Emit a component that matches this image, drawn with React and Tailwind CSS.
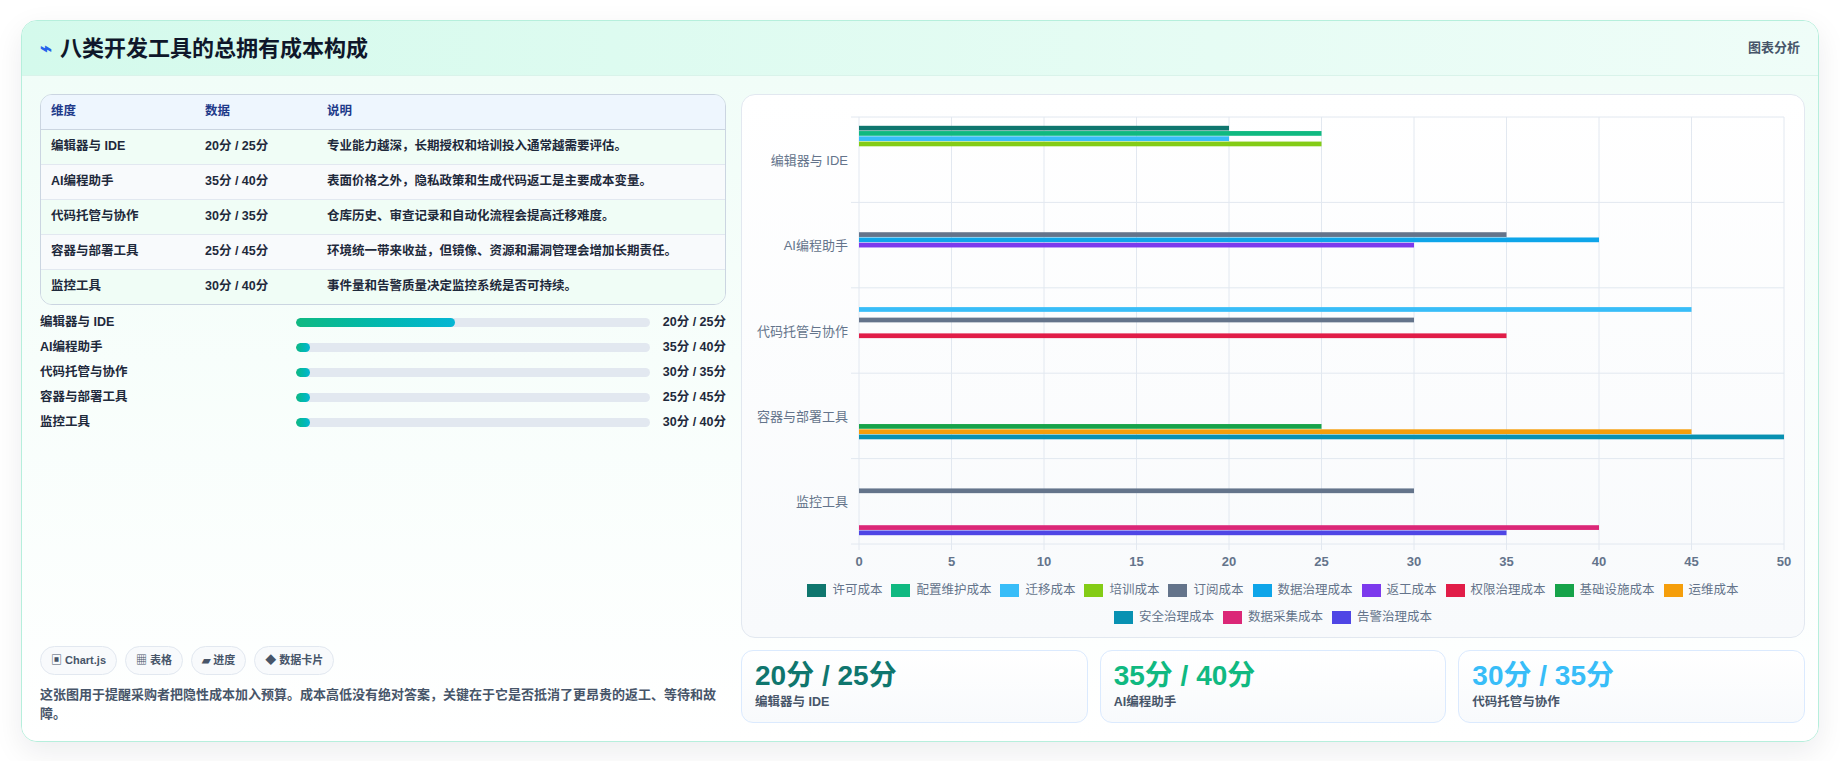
const font = { fontFamily: '"Liberation Sans","Noto Sans CJK SC",sans-serif' };

const rows = [
  { name: '编辑器与 IDE', data: '20分 / 25分', note: '专业能力越深，长期授权和培训投入通常越需要评估。', pct: 45 },
  { name: 'AI编程助手', data: '35分 / 40分', note: '表面价格之外，隐私政策和生成代码返工是主要成本变量。', pct: 4 },
  { name: '代码托管与协作', data: '30分 / 35分', note: '仓库历史、审查记录和自动化流程会提高迁移难度。', pct: 4 },
  { name: '容器与部署工具', data: '25分 / 45分', note: '环境统一带来收益，但镜像、资源和漏洞管理会增加长期责任。', pct: 4 },
  { name: '监控工具', data: '30分 / 40分', note: '事件量和告警质量决定监控系统是否可持续。', pct: 4 },
];

const series = [
  ['许可成本', '#0f766e'], ['配置维护成本', '#10b981'], ['迁移成本', '#38bdf8'], ['培训成本', '#84cc16'],
  ['订阅成本', '#64748b'], ['数据治理成本', '#0ea5e9'], ['返工成本', '#7c3aed'], ['权限治理成本', '#e11d48'],
  ['基础设施成本', '#16a34a'], ['运维成本', '#f59e0b'], ['安全治理成本', '#0891b2'], ['数据采集成本', '#db2777'],
  ['告警治理成本', '#4f46e5'],
];

// [category, series index, value]
const bars = [
  [0, 0, 20], [0, 1, 25], [0, 2, 20], [0, 3, 25],
  [1, 4, 35], [1, 5, 40], [1, 6, 30],
  [2, 2, 45], [2, 4, 30], [2, 7, 35],
  [3, 8, 25], [3, 9, 45], [3, 10, 50],
  [4, 4, 30], [4, 11, 40], [4, 12, 35],
];

function Chart() {
  const x0 = 117, x1 = 1042, y0 = 22, band = 85.4;
  const sx = (v) => x0 + ((x1 - x0) * v) / 50;
  const slot = (band * 0.8) / 13;
  return (
    <svg width="1062" height="480" className="block">
      {[0, 5, 10, 15, 20, 25, 30, 35, 40, 45, 50].map((t) => (
        <g key={t}>
          <line x1={sx(t)} x2={sx(t)} y1={y0} y2={y0 + band * 5 + 6} stroke="#e2e8f0" />
          <text x={sx(t)} y={471} textAnchor="middle" fontSize="13" fontWeight="700" fill="#64748b" style={font}>{t}</text>
        </g>
      ))}
      {[0, 1, 2, 3, 4, 5].map((i) => (
        <line key={i} x1={x0 - 8} x2={x1} y1={y0 + band * i} y2={y0 + band * i} stroke="#e2e8f0" />
      ))}
      {rows.map((r, i) => (
        <text key={r.name} x={106} y={y0 + band * i + band / 2 + 5} textAnchor="end" fontSize="13" fill="#64748b" style={font}>{r.name}</text>
      ))}
      {bars.map(([c, s, v], i) => (
        <rect key={i} x={x0} y={y0 + band * c + band * 0.1 + slot * s + slot * 0.05} width={sx(v) - x0} height={slot * 0.9} fill={series[s][1]} />
      ))}
    </svg>
  );
}

export default function App() {
  return (
    <div className="min-h-screen bg-white p-[20px] pl-[21px] pr-[21px]" style={font}>
      <div className="rounded-[16px] border border-[#b6efdc] bg-white shadow-[0_10px_30px_rgba(15,23,42,0.08)] overflow-hidden">
        {/* Header */}
        <div className="h-[55px] flex items-center justify-between px-[18px] bg-gradient-to-r from-[#d4faec] to-[#effdf8] border-b border-[#d9f3ea]">
          <div className="flex items-center gap-[8px]">
            <span className="text-[#2563eb] text-[20px] font-bold leading-none">⌁</span>
            <h1 className="text-[22px] font-bold text-[#0f172a]">八类开发工具的总拥有成本构成</h1>
          </div>
          <span className="text-[13px] font-semibold text-[#475569]">图表分析</span>
        </div>

        <div className="flex gap-[15px] px-[18px] pt-[18px] pb-[18px] bg-gradient-to-b from-[#f1fdf8] to-white">
          {/* Left */}
          <div className="w-[686px] shrink-0 flex flex-col">
            <div className="rounded-[12px] border border-[#cbd5e1] overflow-hidden">
              <table className="w-full text-[12.5px] font-semibold">
                <thead>
                  <tr className="bg-[#eef6fe] text-[#1e3a8a] h-[34px] border-b border-[#cbd5e1]">
                    <th className="text-left pl-[10px] w-[164px]">维度</th>
                    <th className="text-left w-[122px]">数据</th>
                    <th className="text-left">说明</th>
                  </tr>
                </thead>
                <tbody>
                  {rows.map((r, i) => (
                    <tr key={r.name} className={`h-[35px] text-[#1e293b] ${i < 4 ? 'border-b border-[#e2e8f0]' : ''} ${i % 2 === 0 ? 'bg-[#f0fdf6]' : 'bg-[#f8fafc]'}`}>
                      <td className="pl-[10px]">{r.name}</td>
                      <td>{r.data}</td>
                      <td>{r.note}</td>
                    </tr>
                  ))}
                </tbody>
              </table>
            </div>

            <div className="mt-[8px] flex flex-col gap-[7px]">
              {rows.map((r) => (
                <div key={r.name} className="flex items-center h-[18px] text-[12.5px] font-semibold text-[#1e293b]">
                  <span className="w-[256px]">{r.name}</span>
                  <div className="w-[354px] h-[9px] rounded-full bg-[#e2e8f0] overflow-hidden">
                    <div className="h-full rounded-full bg-gradient-to-r from-[#10b981] to-[#06b6d4]" style={{ width: `${r.pct}%` }} />
                  </div>
                  <span className="ml-auto">{r.data}</span>
                </div>
              ))}
            </div>

            <div className="mt-auto">
              <div className="flex gap-[8px] text-[11px] font-semibold text-[#475569]">
                {['▣ Chart.js', '▦ 表格', '▰ 进度', '◆ 数据卡片'].map((c) => (
                  <span key={c} className="h-[29px] px-[10px] flex items-center rounded-full border border-[#e2e8f0] bg-[#f8fafc]">{c}</span>
                ))}
              </div>
              <p className="mt-[10px] text-[13px] leading-[19px] font-semibold text-[#475569]">
                这张图用于提醒采购者把隐性成本加入预算。成本高低没有绝对答案，关键在于它是否抵消了更昂贵的返工、等待和故障。
              </p>
            </div>
          </div>

          {/* Right */}
          <div className="flex-1 flex flex-col gap-[12px]">
            <div className="h-[544px] rounded-[14px] border border-[#e2e8f0] bg-gradient-to-b from-white to-[#f8fafc]">
              <Chart />
              <div className="mt-[6px] px-[16px] flex flex-wrap justify-center gap-x-[9px] gap-y-[8px] text-[12.5px] text-[#64748b]">
                {series.map(([n, c]) => (
                  <span key={n} className="flex items-center gap-[6px]">
                    <span className="w-[19px] h-[13px] inline-block" style={{ background: c }} />
                    {n}
                  </span>
                ))}
              </div>
            </div>
            <div className="grid grid-cols-3 gap-[12px]">
              {[['20分 / 25分', '编辑器与 IDE', 'text-[#0f766e]'], ['35分 / 40分', 'AI编程助手', 'text-[#10b981]'], ['30分 / 35分', '代码托管与协作', 'text-[#38bdf8]']].map(([v, l, c]) => (
                <div key={l} className="h-[73px] rounded-[12px] border border-[#dbeafe] bg-gradient-to-b from-white to-[#f8fafc] px-[13px] pt-[8px]">
                  <div className={`text-[28px] leading-[34px] font-bold ${c}`}>{v}</div>
                  <div className="text-[12.5px] font-semibold text-[#475569]">{l}</div>
                </div>
              ))}
            </div>
          </div>
        </div>
      </div>
    </div>
  );
}
